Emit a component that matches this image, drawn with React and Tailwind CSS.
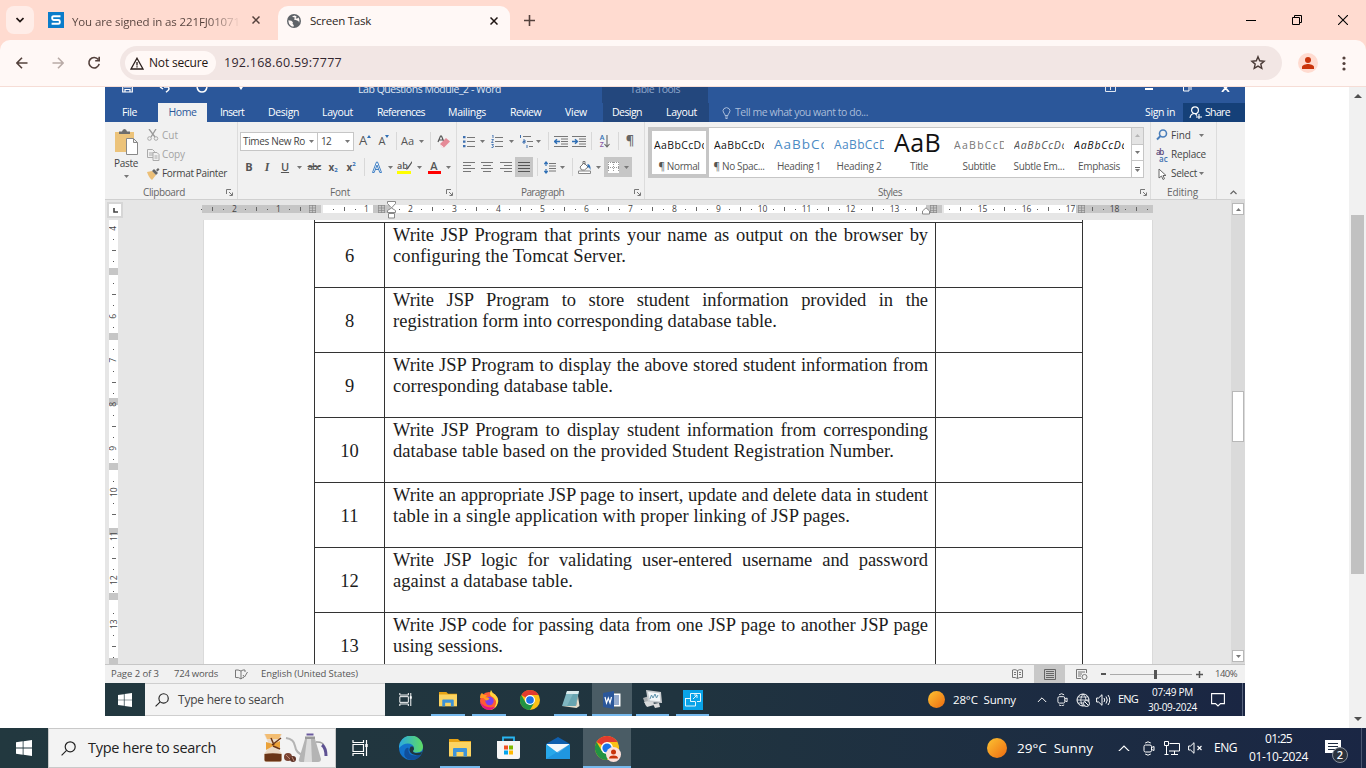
import React, { useLayoutEffect, useRef } from "react";

/* Single-line text whose letter spacing is adjusted so it fills `w` pixels. */
function Fit({ w, className = "", children }) {
  const ref = useRef(null);
  useLayoutEffect(() => {
    const el = ref.current;
    el.style.letterSpacing = "0px";
    const natural = el.getBoundingClientRect().width;
    el.style.letterSpacing = (w - natural) / el.textContent.length + "px";
  }, [w, children]);
  return (
    <span ref={ref} className={"inline-block shrink-0 whitespace-pre " + className}>
      {children}
    </span>
  );
}

function Svg({ w, h, vb, className = "", children, ...rest }) {
  return (
    <svg width={w} height={h} viewBox={vb || `0 0 ${w} ${h}`} fill="none" className={"block shrink-0 " + className} {...rest}>
      {children}
    </svg>
  );
}

const Cell = ({ className = "", children }) => (
  <div className={"flex h-full shrink-0 items-center justify-center " + className}>{children}</div>
);

const Caret = ({ className = "" }) => (
  <Svg w={5} h={3} className={className}><path d="M0 0h5L2.500 3z" fill="#777" /></Svg>
);

const Sep = ({ className = "" }) => <div className={"h-[18px] w-px shrink-0 bg-[#d8d8d8] " + className} />;

/* ---------- Browser chrome ---------- */

function Globe() {
  return (
    <Svg w={14} h={14}>
      <circle cx="7" cy="7" r="7" fill="#5f6368" />
      <path d="M1.400 6.200l3 .5 1.500 1.600-.3 1.500 1.200 1.400-.3 1.500C3.500 12.400 1.400 10 1.400 6.200zM5 2.500l2.600-.9 2 .9-.5 1.200-1.600.6L7 5.600l3.200.8 1.600 1.200.2 1.500c.8-2 .5-4.200-.6-5.600L10 4.800l-1-.6z" fill="#fff8f6" />
    </Svg>
  );
}

function Close({ c = "#3c2b27", s = 8 }) {
  return <Svg w={s} h={s} vb="0 0 8 8"><path d="M.5.5l7 7M7.500.5l-7 7" stroke={c} strokeWidth="1.500" /></Svg>;
}

function TabStrip() {
  return (
    <div className="flex h-10 shrink-0 items-start bg-[#ffdbd0]">
      <div className="ml-1.5 mt-1.5 flex size-7 items-center justify-center rounded-lg bg-[#ffede8]">
        <Svg w={8} h={6}><path d="M.5 1l3.500 3.500L7.500 1" stroke="#1f1512" strokeWidth="1.700" /></Svg>
      </div>
      <div className="ml-3.5 flex h-10 w-[230px] items-center">
        <div className="flex size-4 items-center justify-center bg-[#0a7cca]">
          <Svg w={10} h={10}><path d="M9.500 1.200H2.600Q1.200 1.200 1.200 2.500v1.100Q1.200 5 2.600 5h4.800Q8.800 5 8.800 6.400v1Q8.800 8.800 7.400 8.800H.6" stroke="#fff" strokeWidth="1.900" /></Svg>
        </div>
        <div className="ml-2 w-[169px] bg-gradient-to-r from-[#54413c] from-80% to-[#ffdbd0] to-100% bg-clip-text text-transparent">
          <Fit w={168} className="text-[11.500px] leading-5">You are signed in as 221FJ01071</Fit>
        </div>
        <div className="ml-[11px]"><Close c="#54413c" /></div>
      </div>
      <div className="mt-1.5 flex h-[34px] w-[232px] items-center rounded-t-[10px] bg-[#fff8f6] pb-[5px]">
        <div className="ml-[9px]"><Globe /></div>
        <Fit w={61} className="ml-[9px] text-[11.500px] text-[#2b1f1c]">Screen Task</Fit>
        <div className="ml-[119px]"><Close c="#1f1512" /></div>
      </div>
      <div className="ml-3.5 flex h-10 items-center">
        <Svg w={11} h={11}><path d="M5.500 0v11M0 5.500h11" stroke="#54413c" strokeWidth="1.600" /></Svg>
      </div>
      <div className="ml-auto flex h-10 items-center">
        <div className="flex w-[46px] justify-center"><div className="h-px w-2.5 bg-black" /></div>
        <div className="flex w-[46px] justify-center">
          <Svg w={10} h={10}><path d="M.5 2.500h7v7h-7zM2.500 2V.5h7v7H8" stroke="#000" /></Svg>
        </div>
        <div className="flex w-[46px] justify-center">
          <Svg w={10} h={10}><path d="M0 0l10 10M10 0L0 10" stroke="#000" strokeWidth="1.100" /></Svg>
        </div>
      </div>
    </div>
  );
}

function AddressBar() {
  return (
    <div className="bg-[#ffdbd0]">
      <div className="flex h-[47px] shrink-0 items-center rounded-t-[10px] border-b border-[#f6ddd6] bg-[#fff8f6]">
        <Svg w={12} h={12} className="ml-4"><path d="M11.500 6H1M6 .8L.9 6 6 11.200" stroke="#54413c" strokeWidth="1.600" /></Svg>
        <Svg w={12} h={12} className="ml-6"><path d="M.5 6H11M6 .8L11.100 6 6 11.200" stroke="#b9aba7" strokeWidth="1.600" /></Svg>
        <Svg w={14} h={14} className="ml-[23px]"><path d="M11.300 3.600A5.200 5.200 0 1 0 12.200 7.900M12.200.8v4H8.200" stroke="#54413c" strokeWidth="1.600" /></Svg>
        <div className="ml-[19px] flex h-[34px] w-[1162px] items-center rounded-full bg-[#f2e6e4]">
          <div className="ml-[5px] flex h-6 w-[91px] items-center rounded-full bg-[#fff8f6]">
            <Svg w={14} h={13} className="ml-[5px]"><path d="M7 1.200L13 12H1zM7 5v3.400M7 9.300v1.300" stroke="#2b1f1c" strokeWidth="1.300" /></Svg>
            <Fit w={59} className="ml-[5px] text-xs font-medium text-[#1f1512]">Not secure</Fit>
          </div>
          <Fit w={118} className="ml-2 text-[12.500px] text-[#33262f]">192.168.60.59:7777</Fit>
          <Svg w={16} h={16} className="ml-auto mr-[16px]"><path d="M8 1.700l1.700 4.100 4.400.4-3.300 2.900 1 4.300L8 11.100l-3.800 2.300 1-4.300-3.300-2.900 4.400-.4z" stroke="#4a3a36" strokeWidth="1.400" /></Svg>
        </div>
        <div className="ml-4 flex size-5 items-center justify-center rounded-full bg-[#ffdbd0]">
          <Svg w={12} h={12}><circle cx="6" cy="3" r="3" fill="#c9340b" /><path d="M0 12v-2c0-2 4-3 6-3s6 1 6 3v2z" fill="#c9340b" /></Svg>
        </div>
        <Svg w={4} h={15} className="ml-6"><circle cx="2" cy="2" r="1.600" fill="#54413c" /><circle cx="2" cy="7.500" r="1.600" fill="#54413c" /><circle cx="2" cy="13" r="1.600" fill="#54413c" /></Svg>
      </div>
    </div>
  );
}

/* ---------- Word header ---------- */

function WordHeader() {
  return (
    <div className="flex h-[35px] shrink-0 flex-col bg-[#2b579a] text-[10.500px] text-white">
      <div className="flex h-4 items-start overflow-hidden">
        <Svg w={11} h={6} className="ml-[17px]"><path d="M.7 0v5h9.600V0M2 0h7M3 5V2.500h5V5" stroke="#fff" strokeWidth="1.200" /></Svg>
        <Svg w={12} h={6} className="ml-[26px]"><path d="M1 0l3 2M5 0h4q2 1.500 0 3.500L7 5.300" stroke="#fff" strokeWidth="1.500" /></Svg>
        <Svg w={12} h={6} className="ml-[25px]"><path d="M1 0q1 5 5 5t5-5" stroke="#fff" strokeWidth="1.500" /></Svg>
        <Svg w={4} h={3} className="ml-[31px]"><path d="M0 0h4L2 3z" fill="#fff" /></Svg>
        <Fit w={143} className="-mt-[5px] ml-[115px] leading-[14px] text-[#dfe6f1]">Lab Questions Module_2 - Word</Fit>
        <div className="ml-[101px] flex h-4 w-[106px] justify-center bg-[#23477d]">
          <Fit w={50} className="-mt-[5px] leading-[14px] text-[#8ea6cb]">Table Tools</Fit>
        </div>
        <Svg w={11} h={6} className="ml-[397px]"><path d="M.5 0v4.500h10V0M5.500 0v3" stroke="#dfe6f1" /></Svg>
        <div className="ml-[29px] mt-px h-[2px] w-2 bg-white" />
        <Svg w={9} h={6} className="ml-[30px]"><path d="M.5 0v4h5.500V0M8 0v3" stroke="#fff" /></Svg>
        <Svg w={9} h={5} className="ml-[29px]"><path d="M1 5l3.500-4L8 5M3 0l1.500 1L6 0" stroke="#fff" strokeWidth="1.800" /></Svg>
      </div>
      <div className="flex h-[19px] items-center">
        <Fit w={15} className="ml-[17px]">File</Fit>
        <div className="ml-[21px] flex h-full w-[49px] items-center justify-center bg-[#f1f1f1] text-[#2b579a]"><Fit w={28}>Home</Fit></div>
        <Fit w={24} className="ml-[13px]">Insert</Fit>
        <Fit w={31} className="ml-6">Design</Fit>
        <Fit w={31} className="ml-[23px]">Layout</Fit>
        <Fit w={48} className="ml-6">References</Fit>
        <Fit w={38} className="ml-[23px]">Mailings</Fit>
        <Fit w={31} className="ml-6">Review</Fit>
        <Fit w={22} className="ml-6">View</Fit>
        <div className="ml-4 flex h-full w-[106px] items-center bg-[#23477d]">
          <Fit w={30} className="ml-[9px]">Design</Fit>
          <Fit w={31} className="ml-6">Layout</Fit>
        </div>
        <Svg w={9} h={12} className="ml-[13px]"><path d="M3 8.500Q3 7 1.800 6 0 3.500 2 1.600q2.500-2 5 0 2 1.900.2 4.400Q6 7 6 8.500zM3 10h3M3.500 11.500h2" stroke="#a9bcd9" /></Svg>
        <Fit w={133} className="ml-1 text-[#a9bcd9]">Tell me what you want to do...</Fit>
        <Fit w={30} className="ml-auto">Sign in</Fit>
        <div className="ml-2 flex h-full w-[62px] items-center bg-[#154078]">
          <Svg w={13} h={13} className="ml-1.5"><circle cx="6" cy="4.200" r="3.400" stroke="#fff" strokeWidth="1.200" /><path d="M1 12q.5-4 4-4.500M6.500 8l1.500 1.500M7 11h6M10 8v5" stroke="#fff" strokeWidth="1.100" /></Svg>
          <Fit w={25} className="ml-[3px]">Share</Fit>
        </div>
      </div>
    </div>
  );
}

/* ---------- Ribbon ---------- */

const Launcher = ({ className }) => (
  <Svg w={7} h={7} className={"ml-auto " + className}><path d="M.5 5V.5H5M3 3l3 3M6.500 3.500v3h-3" stroke="#777" /></Svg>
);

const Lines = ({ rows, c = "#777" }) => (
  <Svg w={12} h={11}><path d={rows.map(([x, l], i) => `M${x} ${i * 3 + 0.5}h${l}`).join("")} stroke={c} /></Svg>
);

function ListIcon({ kind }) {
  return (
    <Svg w={kind === "multi" ? 14 : 12} h={13}>
      {kind === "bullet" && <path d="M0 1h2.500v2.200H0zM0 5.500h2.500v2.200H0zM0 10h2.500v2.200H0z" fill="#3f70b0" />}
      {kind === "num" && <path d="M1 0h1v3M.5 4.500h2l-2 3h2M.5 9.500h2l-1 1.200 1 .4-.5 1.400H.5" stroke="#3f70b0" strokeWidth=".9" />}
      {kind === "multi" && <path d="M1.500 0v3M4 5h2v3H4V6.500h2M8 10v3" stroke="#3f70b0" />}
      {kind === "multi" ? <path d="M4 1.500h8M8 6.500h6M10 11.500h4" stroke="#777" /> : <path d="M4 2.500h8M4 6.500h8M4 11.500h8" stroke="#777" />}
    </Svg>
  );
}

function IndentIcon({ flip }) {
  return (
    <Svg w={14} h={11}>
      <path d="M0 .5h14M7 3h7M7 5.500h7M7 8h7M0 10.500h14" stroke="#777" />
      <path d={flip ? "M0 5.500h5M3 3.200l2.500 2.300L3 7.800" : "M6 5.500H1M3 3.200L.5 5.500 3 7.800"} stroke="#2f6fb5" strokeWidth="1.400" />
    </Svg>
  );
}

function Clipboard() {
  return (
    <div className="flex w-[132px] shrink-0 flex-col">
      <div className="flex h-16">
        <div className="flex w-[42px] flex-col items-center pt-[7px]">
          <Svg w={24} h={26}>
            <path d="M1 3h19v20H1z" fill="#ecc37a" /><path d="M5 5V2.500h3Q8.500 0 10.500 0T13 2.500h3V5z" fill="#6d6d6d" />
            <path d="M12.500 9.500h7l4 4v12h-11zM19.500 9.500v4h4" fill="#fff" stroke="#888" />
          </Svg>
          <Fit w={24} className="mt-[2px] text-[10px] leading-3 text-[#444]">Paste</Fit>
          <Caret className="mt-1.5" />
        </div>
        <div className="flex flex-col pt-[3px] text-[10px] text-[#a3a3a3]">
          <div className="flex h-5 items-center">
            <Svg w={12} h={12}><path d="M2 0l6 8M9 0L4 8" stroke="#999" strokeWidth="1.300" /><circle cx="2.500" cy="9.500" r="1.800" stroke="#aaa" /><circle cx="9" cy="9.500" r="1.800" stroke="#aaa" /></Svg>
            <Fit w={16} className="ml-[3px]">Cut</Fit>
          </div>
          <div className="flex h-[19px] items-center">
            <Svg w={13} h={12}><path d="M.5.5h5l2 2v6h-7zM2 4h4M2 6h4" stroke="#aaa" /><path d="M6 3.500h4l2 2v6H6zM7.500 7h3M7.500 9h3" fill="#f1f1f1" stroke="#aaa" /></Svg>
            <Fit w={23} className="ml-0.5">Copy</Fit>
          </div>
          <div className="flex h-[19px] items-center text-[#444]">
            <Svg w={13} h={12}><path d="M0 4l5-1 4 4-4 5Q2 10 0 4z" fill="#ecbf77" /><path d="M5 3l2-2 4 4-2 2zM9 2l2-2 1.500 1.500-2 2z" fill="#666" /></Svg>
            <Fit w={65} className="ml-0.5">Format Painter</Fit>
          </div>
        </div>
      </div>
      <div className="flex h-[13px] items-center"><Fit w={42} className="ml-[38px] text-[10px] text-[#666]">Clipboard</Fit><Launcher className="mr-1" /></div>
    </div>
  );
}

function FontGroup() {
  return (
    <div className="flex w-[219px] shrink-0 flex-col border-l border-[#dcdcdc] pl-[2px] text-[#555]">
      <div className="mt-[9px] flex h-5 items-center">
        <div className="flex h-[19px] w-[78px] items-center border border-[#c6c6c6] bg-white pl-0.5 text-[10px] text-[#444]"><Fit w={62}>Times New Ro</Fit><Caret className="ml-1" /></div>
        <div className="flex h-[19px] w-9 items-center border-y border-r border-[#c6c6c6] bg-white pl-[3px] text-[10px] text-[#444]"><Fit w={10}>12</Fit><Caret className="ml-[14px]" /></div>
        <Cell className="w-[22px]"><span className="text-[13px]">A</span><Svg w={4} h={3} className="-mt-2.5"><path d="M0 3h4L2 0z" fill="#2f6fb5" /></Svg></Cell>
        <Cell className="ml-px w-[14px]"><span className="text-[11px]">A</span><Svg w={4} h={3} className="-mt-2.5"><path d="M0 0h4L2 3z" fill="#2f6fb5" /></Svg></Cell>
        <Sep className="ml-[5px]" />
        <Cell className="w-[21px]"><Fit w={13} className="text-[11px]">Aa</Fit></Cell>
        <Cell className="w-1.5"><Caret /></Cell>
        <Sep className="ml-1.5" />
        <Cell className="w-6"><Svg w={13} h={13}><path d="M1 7l2.500-6h1L7 7M2 5h4" stroke="#555" strokeWidth="1.200" /><path d="M3 9l6-6 4 3.500-6 6H5z" fill="#e58a97" /><path d="M3 9l4 3.500H5z" fill="#fff" /></Svg></Cell>
      </div>
      <div className="mt-1.5 flex h-5 items-center">
        <Cell className="w-[18px] text-[11px] font-bold">B</Cell>
        <Cell className="w-[18px] font-['Liberation_Serif',serif] text-[12px] font-bold italic">I</Cell>
        <Cell className="w-[18px] text-[11px] font-semibold underline">U</Cell>
        <Cell className="w-2.5"><Caret /></Cell>
        <Cell className="w-5 text-[9.500px] font-semibold line-through"><Fit w={13}>abc</Fit></Cell>
        <Cell className="w-[18px] text-[10px] font-bold">x<span className="mt-1.5 text-[6px] text-[#2f6fb5]">2</span></Cell>
        <Cell className="w-[18px] text-[10px] font-bold">x<span className="-mt-1.5 text-[6px] text-[#2f6fb5]">2</span></Cell>
        <Sep className="ml-1" />
        <Cell className="ml-0.5 w-5"><Svg w={12} h={12}><path d="M1.500 11.500L5.500 1h1l4 10.500H8.800L6 4l-2.800 7.500z" fill="#fff" stroke="#3f7fc4" /><path d="M4 8.500h4" stroke="#3f7fc4" /></Svg></Cell>
        <Cell className="ml-px w-[5px]"><Caret /></Cell>
        <Cell className="w-[23px]"><div className="flex flex-col items-center"><div className="flex h-[10px] items-center text-[9px] font-semibold">ab<Svg w={6} h={9} className="-ml-0.5"><path d="M6 0L1 7l-1 2 2-1 4-6z" fill="#555" /></Svg></div><div className="h-[3px] w-[14px] bg-[#ffff00]" /></div></Cell>
        <Cell className="w-1.5"><Caret /></Cell>
        <Cell className="w-6"><div className="flex flex-col items-center"><span className="h-[10px] text-[11px] font-semibold leading-[9px]">A</span><div className="h-[3px] w-[13px] bg-[#ff0000]" /></div></Cell>
        <Cell className="w-[5px]"><Caret /></Cell>
      </div>
      <div className="mt-auto flex h-[13px] items-center"><Fit w={20} className="ml-[90px] text-[10px] text-[#666]">Font</Fit><Launcher className="mr-[3px]" /></div>
    </div>
  );
}

function ParagraphGroup() {
  return (
    <div className="flex w-[188px] shrink-0 flex-col border-l border-[#dcdcdc]">
      <div className="mt-[9px] flex h-5 items-center">
        <Cell className="ml-1.5 w-3"><ListIcon kind="bullet" /></Cell>
        <Cell className="w-3.5"><Caret /></Cell>
        <Cell className="w-4"><ListIcon kind="num" /></Cell>
        <Cell className="w-3"><Caret /></Cell>
        <Cell className="w-[18px]"><ListIcon kind="multi" /></Cell>
        <Cell className="w-[7px]"><Caret /></Cell>
        <Sep className="ml-1.5" />
        <Cell className="ml-[5px] w-3.5"><IndentIcon /></Cell>
        <Cell className="ml-1 w-3.5"><IndentIcon flip /></Cell>
        <Sep className="ml-[5px]" />
        <Cell className="w-[26px]">
          <div className="flex flex-col text-[7px] font-semibold leading-[7px]"><span className="text-[#2f6fb5]">A</span><span className="text-[#8a5aa5]">Z</span></div>
          <Svg w={6} h={13}><path d="M3 0v12M.5 9L3 12l2.500-3" stroke="#666" strokeWidth="1.100" /></Svg>
        </Cell>
        <Sep />
        <Cell className="w-[22px] text-[13px] font-semibold text-[#666]">¶</Cell>
      </div>
      <div className="mt-1.5 flex h-5 items-center">
        <Cell className="ml-1.5 w-3"><Lines rows={[[0, 12], [0, 8], [0, 12], [0, 8]]} /></Cell>
        <Cell className="ml-1.5 w-3"><Lines rows={[[0, 12], [2, 8], [0, 12], [2, 8]]} /></Cell>
        <Cell className="ml-[7px] w-3"><Lines rows={[[0, 12], [4, 8], [0, 12], [4, 8]]} /></Cell>
        <Cell className="ml-[3px] w-[18px] bg-[#c6c6c6]"><Lines rows={[[0, 12], [0, 12], [0, 12], [0, 12]]} c="#555" /></Cell>
        <Sep className="ml-1" />
        <Cell className="ml-1.5 w-3"><Svg w={12} h={13}><path d="M2 1v4M.3 3L2 1l1.700 2M2 8v4M.3 10L2 12l1.700-2" stroke="#2f6fb5" strokeWidth="1.200" /><path d="M5 2.500h7M5 5h7M5 7.500h7M5 10h7" stroke="#777" /></Svg></Cell>
        <Cell className="w-3"><Caret /></Cell>
        <Sep className="ml-1" />
        <Cell className="ml-[5px] w-3.5"><Svg w={14} h={13}><path d="M2 6l4-4 4 4-3.500 3H3.500zM5 3V.5h2V4" stroke="#777" fill="#fff" /><path d="M9.500 3q3.500.5 3 6-1-3-3-3z" fill="#2f6fb5" /><path d="M.5 10h12v2.500H.5z" stroke="#888" fill="#fff" /></Svg></Cell>
        <Cell className="w-3"><Caret /></Cell>
        <Cell className="w-7 bg-[#c6c6c6]"><Svg w={11} h={11}><path d="M0 0h11v11H0z" fill="#fff" /><path d="M.5 0v11M5.500 0v11M10.500 0v11M0 .5h11M0 5.500h11" stroke="#999" strokeDasharray="1 1" /><path d="M0 10.500h11" stroke="#fff" /></Svg><Caret className="ml-[5px]" /></Cell>
      </div>
      <div className="mt-auto flex h-[13px] items-center"><Fit w={43} className="ml-16 text-[10px] text-[#666]">Paragraph</Fit><Launcher className="mr-[3px]" /></div>
    </div>
  );
}

const STYLES = [
  { s: "AaBbCcDc", n: "¶ Normal", nw: 41, sw: 53, cls: "text-[10.500px] text-[#111]", sel: true },
  { s: "AaBbCcDc", n: "¶ No Spac...", nw: 51, sw: 53, cls: "text-[10.500px] text-[#111]" },
  { s: "AaBbCc", n: "Heading 1", nw: 44, sw: 54, cls: "text-[13.500px] text-[#4a8ac4]" },
  { s: "AaBbCcD", n: "Heading 2", nw: 45, sw: 54, cls: "text-[12px] text-[#4a8ac4]" },
  { s: "AaB", n: "Title", nw: 18, sw: 47, cls: "-mt-1.5 text-[25px] text-[#111]" },
  { s: "AaBbCcD", n: "Subtitle", nw: 33, sw: 54, cls: "text-[10.500px] text-[#777]" },
  { s: "AaBbCcDc", n: "Subtle Em...", nw: 51, sw: 53, cls: "text-[10.500px] text-[#555] italic" },
  { s: "AaBbCcDc", n: "Emphasis", nw: 42, sw: 53, cls: "text-[10.500px] text-[#111] italic" },
];

function StylesGroup() {
  return (
    <div className="flex w-[506px] shrink-0 flex-col border-l border-[#dcdcdc]">
      <div className="ml-[3px] mt-[5px] flex h-[51px] w-[496px] border border-[#c6c6c6] bg-white">
        {STYLES.map((t, i) => (
          <div key={i} className={"flex h-full w-[60px] shrink-0 flex-col items-center " + (t.sel ? "border-[3px] border-[#c6c6c6]" : "py-[3px]")}>
            <div className="flex h-[28px] w-[50px] shrink-0 items-center overflow-hidden">
              <Fit w={t.sw} className={"leading-none " + t.cls}>{t.s}</Fit>
            </div>
            <Fit w={t.nw} className="text-[10px] leading-[14px] text-[#555]">{t.n}</Fit>
          </div>
        ))}
        <div className="ml-auto flex w-3 flex-col border-l border-[#c6c6c6]">
          <div className="flex flex-1 items-center justify-center bg-[#e4e4e4]"><Svg w={5} h={3}><path d="M0 3h5L2.500 0z" fill="#b5b5b5" /></Svg></div>
          <div className="flex flex-1 items-center justify-center border-y border-[#c6c6c6]"><Caret /></div>
          <div className="flex flex-1 flex-col items-center justify-center"><div className="mb-px h-px w-[5px] bg-[#666]" /><Caret /></div>
        </div>
      </div>
      <div className="mt-auto flex h-[13px] items-center"><Fit w={24} className="ml-[233px] text-[10px] text-[#666]">Styles</Fit><Launcher className="mr-[3px]" /></div>
    </div>
  );
}

function EditingGroup() {
  return (
    <div className="flex w-[95px] shrink-0 border-l border-[#dcdcdc] text-[10px] text-[#444]">
      <div className="flex w-[66px] flex-col border-r border-[#dcdcdc] pl-[5px] pt-[3px]">
        <div className="flex h-5 items-center">
          <Svg w={12} h={12}><circle cx="7" cy="4.500" r="3.500" stroke="#4a7ebb" strokeWidth="1.600" /><path d="M4.500 7L1 10.500" stroke="#4a7ebb" strokeWidth="2" /></Svg>
          <Fit w={20} className="ml-[3px]">Find</Fit><Caret className="ml-2" />
        </div>
        <div className="flex h-[19px] items-center">
          <div className="flex w-[13px] flex-col text-[8px] font-semibold leading-[7px]"><Fit w={10} className="h-[7px] text-[#5c4a7a]">ab</Fit><Fit w={10} className="ml-[3px] h-[7px] text-[#3f70b0]">ac</Fit></div>
          <Fit w={35} className="ml-0.5">Replace</Fit>
        </div>
        <div className="flex h-[19px] items-center">
          <Svg w={9} h={12} className="ml-0.5"><path d="M1 1v9l2.500-2L5 11.500l1.500-.8L5 7.500h3z" stroke="#666" fill="#fff" /></Svg>
          <Fit w={26} className="ml-1">Select</Fit><Caret className="ml-0.5" />
        </div>
        <div className="mt-auto flex h-[13px] items-center"><Fit w={31} className="ml-[11px] text-[#666]">Editing</Fit></div>
      </div>
      <Svg w={7} h={5} className="mb-1 ml-[13px] mt-auto"><path d="M.5 4l3-3 3 3" stroke="#666" strokeWidth="1.200" /></Svg>
    </div>
  );
}

/* ---------- Rulers ---------- */

const H_TICKS = Array.from({ length: 87 }, (_, k) => {
  if ([10, 11, 16, 17, 66, 67, 80].includes(k)) return "";
  if (k % 4 === 3) return String(Math.abs(k - 11) / 4);
  return k % 4 === 1 ? "|" : ".";
});

const V_TICKS = Array.from({ length: 40 }, (_, k) => {
  if ([4, 10, 22, 27, 34].includes(k)) return "";
  if (k % 4 === 0) return String(4 + k / 4);
  return k % 4 === 2 ? "|" : ".";
});

const Grip = () => (
  <Svg w={7} h={8}><path d="M0 .5h7M0 3h7M0 5.500h7M0 7.500h7M.5 0v8M3.500 0v8M6.500 0v8" stroke="#8a8a8a" strokeWidth=".7" /></Svg>
);

function HorizontalRuler() {
  return (
    <div className="flex h-[21px] shrink-0 border-t border-[#d0d0d0]">
      <div className="ml-[2px] mt-[2px] flex size-4 items-center justify-center border-2 border-[#d6d6d6] bg-white">
        <Svg w={5} h={5}><path d="M1 0v4h4" stroke="#444" strokeWidth="1.600" /></Svg>
      </div>
      <div className="ml-[73px] mt-[5px] grid h-[10px] w-[957.5px]">
        <div className="flex h-2 pl-1.5 [grid-area:1/1]">
          <div className="flex w-[119px] items-center justify-end bg-[#c6c6c6] pr-[5px]"><Grip /></div>
          <div className="ml-0.5 w-[50px] bg-white" />
          <div className="flex w-[17px] items-center bg-[#c6c6c6] pl-[5px]"><Grip /></div>
          <div className="w-[536px] bg-white" />
          <div className="flex w-4 items-center bg-[#c6c6c6] pl-1"><Grip /></div>
          <div className="ml-0.5 w-[132px] bg-white" />
          <div className="flex w-[77px] items-center bg-[#c6c6c6] pl-[2px]"><Grip /></div>
        </div>
        <div className="flex h-2 [grid-area:1/1]">
          {H_TICKS.map((t, i) => (
            <div key={i} className="flex min-w-0 flex-1 items-center justify-center whitespace-nowrap text-[8.500px] leading-none text-[#444]">
              {t === "." ? <div className="size-px bg-[#555]" /> : t === "|" ? <div className="h-1 w-px bg-[#666]" /> : t}
            </div>
          ))}
        </div>
        <div className="relative h-0 [grid-area:1/1]">
          <Svg w={9} h={18} className="absolute -top-1 left-[191px]"><path d="M.5.500h8v2L4.500 7l-4-4.500zM.5 11.500v-2L4.500 7l4 2.500v2zM1.500 12.500h6v4.500h-6z" fill="#fff" stroke="#888" /></Svg>
          <Svg w={8} h={8} className="absolute left-[726px] top-[2px]"><path d="M.5 7V4L4 .8 7.500 4v3z" fill="#fff" stroke="#888" /></Svg>
        </div>
      </div>
    </div>
  );
}

function VerticalRuler() {
  return (
    <div className="ml-1 grid h-full w-[9px] overflow-hidden bg-white">
      <div className="flex flex-col pt-12 [grid-area:1/1]">
        {Array.from({ length: 7 }, (_, i) => <div key={i} className="mb-[58.500px] h-[6.500px] shrink-0 bg-[#c6c6c6]" />)}
      </div>
      <div className="flex flex-col pt-[3px] [grid-area:1/1]">
        {V_TICKS.map((t, i) => (
          <div key={i} className="flex h-[11px] shrink-0 items-center justify-center text-[8.500px] leading-none text-[#444]">
            {t === "." ? <div className="size-px bg-[#555]" /> : t === "|" ? <div className="h-px w-1 bg-[#666]" /> : <span className="-rotate-90">{t}</span>}
          </div>
        ))}
      </div>
    </div>
  );
}

/* ---------- Document ---------- */

const ROWS = [
  ["6", "Write JSP Program that prints your name as output on the browser by", "configuring the Tomcat Server.", 233],
  ["8", "Write JSP Program to store student information provided in the", "registration form into corresponding database table.", 384],
  ["9", "Write JSP Program to display the above stored student information from", "corresponding database table.", 220],
  ["10", "Write JSP Program to display student information from corresponding", "database table based on the provided Student Registration Number.", 501],
  ["11", "Write an appropriate JSP page to insert, update and delete data in student", "table in a single application with proper linking of JSP pages.", 457],
  ["12", "Write JSP logic for validating user-entered username and password", "against a database table.", 180],
  ["13", "Write JSP code for passing data from one JSP page to another JSP page", "using sessions.", 110],
];

function DocPage() {
  return (
    <div className="ml-[85px] h-full w-[950px] overflow-hidden border-x border-[#dadada] bg-white pl-[110px] font-['Liberation_Serif','Times_New_Roman',serif] text-[18.500px] leading-[21px] text-[#1c1c1c]">
      <div className="flex w-[769px] flex-col border-x border-[#333] pt-[2px]">
        {ROWS.map(([num, first, second, w]) => (
          <div key={num} className="flex h-[65px] shrink-0 border-t border-[#333]">
            <div className="flex w-[69px] shrink-0 justify-center pt-[23px]">{num}</div>
            <div className="w-[552px] shrink-0 border-x border-[#333] pl-2 pt-[2px]">
              <div className="w-[535px] whitespace-nowrap tracking-[-0.09px] [text-align-last:justify]">{first}</div>
              <Fit w={w} className="align-top">{second}</Fit>
            </div>
          </div>
        ))}
      </div>
    </div>
  );
}

function WordScrollbar() {
  return (
    <div className="flex w-3.5 shrink-0 flex-col items-center bg-[#dadada] pt-1">
      <div className="flex h-3 w-3 items-center justify-center border border-[#b8b8b8] bg-white"><Svg w={5} h={3}><path d="M0 3h5L2.500 0z" fill="#777" /></Svg></div>
      <div className="mt-[176px] h-[51px] w-3 border border-[#b8b8b8] bg-white" />
      <div className="mb-[2px] mt-auto flex h-3 w-3 items-center justify-center border border-[#b8b8b8] bg-white"><Svg w={5} h={3}><path d="M0 0h5L2.500 3z" fill="#777" /></Svg></div>
    </div>
  );
}

function StatusBar() {
  return (
    <div className="flex h-[19px] shrink-0 items-center border-t border-[#c6c6c6] bg-[#f1f1f1] text-[9.500px] text-[#555]">
      <Fit w={48} className="ml-1.5">Page 2 of 3</Fit>
      <Fit w={44} className="ml-[15px]">724 words</Fit>
      <Svg w={13} h={11} className="ml-[17px]"><path d="M6 2Q3 .5.500 1v7.500Q4 8 6 10q1-1.500 3-1.500M6 2v8M6 2q2-1.500 4-1v2M8 6l1.500 2L12.500 3" stroke="#777" /></Svg>
      <Fit w={97} className="ml-[13px]">English (United States)</Fit>
      <Svg w={11} h={10} className="ml-auto"><path d="M5.500 1.500Q3 0 .5 1v7.500q3-.5 5 1 2-1.500 5-1V1q-3-1-5 .5v8M2 3.500h2M2 5.500h2M7 3.500h2M7 5.500h2" stroke="#777" /></Svg>
      <div className="ml-[11px] flex h-full w-[31px] items-center justify-center bg-[#c8c8c8]"><Svg w={12} h={11}><path d="M.5.500h11v10H.5zM2 2.500h8M2 4.500h8M2 6.500h8M2 8.500h8" stroke="#666" /></Svg></div>
      <Svg w={12} h={11} className="ml-[11px]"><path d="M10.500 4V.500H.5v9H5M2 3h7M2 5h4M2 7h3" stroke="#777" /><circle cx="8.500" cy="8" r="2.500" stroke="#777" /></Svg>
      <div className="ml-[13px] h-[1.500px] w-[5px] bg-[#555]" />
      <div className="ml-1 flex w-[82px] items-center">
        <div className="h-px w-[44px] bg-[#aaa]" /><div className="h-[9px] w-[3px] bg-[#555]" /><div className="h-px flex-1 bg-[#aaa]" />
      </div>
      <Svg w={7} h={7} className="ml-1"><path d="M3.500 0v7M0 3.500h7" stroke="#555" strokeWidth="1.500" /></Svg>
      <Fit w={22} className="ml-3 mr-2">140%</Fit>
    </div>
  );
}

/* ---------- Taskbar icons ---------- */

const Windows = ({ s }) => (
  <Svg w={s} h={s} vb="0 0 16 16"><path d="M0 2.300l6.700-1v6.300H0zM7.500 1.200L16 0v7.600H7.500zM0 8.400h6.700v6.300L0 13.700zM7.500 8.400H16V16l-8.500-1.200z" fill="#fff" /></Svg>
);
const Search = ({ s }) => (
  <Svg w={s} h={s} vb="0 0 15 15"><circle cx="9.200" cy="5.800" r="5" stroke="#222" strokeWidth="1.200" /><path d="M5.600 9.400L.6 14.400" stroke="#222" strokeWidth="1.200" /></Svg>
);
const TaskView = ({ s }) => (
  <Svg w={s} h={s} vb="0 0 16 16"><path d="M1 0v2.500h10.500V0M1 16v-2.500h10.500V16M1 4.500h10.500v7H1zM14.500 0v16" stroke="#fff" strokeWidth="1.200" /><path d="M13.300 4h2.400v3h-2.400z" fill="#fff" /></Svg>
);
const Folder = ({ w }) => (
  <Svg w={w} h={w * 0.82} vb="0 0 22 18"><path d="M0 0h9l2 2h11v15H0z" fill="#e8a313" /><path d="M0 3h22v14.500H0z" fill="#fcd462" /><path d="M4 17.500V10q0-1 1-1h12q1 0 1 1v7.500h-3.500V13h-7v4.500z" fill="#3e93d8" /></Svg>
);
const Chrome = ({ s }) => (
  <Svg w={s} h={s} vb="0 0 24 24">
    <circle cx="12" cy="12" r="12" fill="#fbc116" />
    <path d="M12 12L1.600 6A12 12 0 0 1 22.400 6H12z" fill="#e33b2e" /><path d="M1.600 6a12 12 0 0 0 10.400 18l5.200-9L12 12 6.800 15z" fill="#229342" />
    <circle cx="12" cy="12" r="6" fill="#fff" /><circle cx="12" cy="12" r="4.600" fill="#1a73e8" />
  </Svg>
);
const Sun = ({ s }) => (
  <Svg w={s} h={s} vb="0 0 20 20"><defs><linearGradient id="sun" x1="0" y1="0" x2="1" y2="1"><stop stopColor="#fcc433" /><stop offset="1" stopColor="#ee6a10" /></linearGradient></defs><circle cx="10" cy="10" r="10" fill="url(#sun)" /></Svg>
);
const ChevUp = ({ w }) => <Svg w={w} h={w * 0.58} vb="0 0 12 7"><path d="M.6 6.400L6 1l5.400 5.400" stroke="#fff" strokeWidth="1.200" /></Svg>;
const MeetNow = ({ s }) => (
  <Svg w={s} h={s * 1.25} vb="0 0 12 15"><path d="M2.200 2Q5-.4 7.800 2M2.200 13Q5 15.400 7.800 13" stroke="#fff" /><rect x="1" y="4" width="7.500" height="7" rx="1.500" stroke="#fff" /><path d="M8.500 6.500L11 5.500v4l-2.500-1" stroke="#fff" /></Svg>
);
const Speaker = ({ mute }) => (
  <Svg w={15} h={12}><path d="M.6 4v4h2L6 11.300V.7L2.600 4z" stroke="#fff" />{mute ? <path d="M9.500 4l4 4M13.500 4l-4 4" stroke="#fff" strokeWidth="1.100" /> : <path d="M8 4q1.500 2 0 4M10 2.500q2.600 3.500 0 7M12 1q3.600 5 0 10" stroke="#fff" />}</Svg>
);

const TaskItem = ({ className = "", line = "", children }) => (
  <div className={"flex h-full shrink-0 flex-col items-center " + className}>
    <div className="flex flex-1 items-center pt-0.5">{children}</div>
    <div className={"h-[2px] " + line} />
  </div>
);

function InnerTaskbar() {
  return (
    <div className="flex h-[33px] shrink-0 items-center bg-gradient-to-r from-[#22383f] via-[#20343f] to-[#1a2643] text-white">
      <div className="flex w-10 justify-center"><Windows s={14} /></div>
      <div className="flex h-full w-60 items-center border-y border-[#cfcfcf] bg-[#f3f3f3]">
        <div className="ml-2.5"><Search s={14} /></div>
        <Fit w={106} className="ml-[9px] text-[12px] text-[#444]">Type here to search</Fit>
      </div>
      <TaskItem className="w-10"><TaskView s={13} /></TaskItem>
      <TaskItem className="ml-[6px] w-[34px]" line="w-full bg-[#76b9ed]"><Folder w={18} /></TaskItem>
      <TaskItem className="ml-[7px] w-[34px]" line="w-full bg-[#76b9ed]">
        <Svg w={20} h={20}><circle cx="10" cy="11" r="9" fill="#ff5a36" /><path d="M12 0q1 3 4 4.500 4 4 3 8Q17 20 10 20q8-2 7-9-2-4-5-5-2-2 0-6z" fill="#ffd43b" /><path d="M1 8q0-4 2-5l2 2h3L6 8z" fill="#ff9b22" /><path d="M1 12q2 7 9 8 4 0 6-3Q6 19 1 12z" fill="#e31587" /><circle cx="10.500" cy="11" r="4.200" fill="#7a3ff0" /><path d="M4.500 8q3-1.500 6 .5-1 2-3.500 2z" fill="#ff9b22" /></Svg>
      </TaskItem>
      <TaskItem className="ml-[7px] w-[34px]"><Chrome s={20} /></TaskItem>
      <TaskItem className="ml-[7px] w-[33px]" line="w-full bg-[#76b9ed]">
        <Svg w={19} h={19}><path d="M6 1h12l-3 15H1z" fill="#7fb6c1" /><path d="M6 1h12l-.8 3H5z" fill="#dcebed" /><path d="M12 4h5l-2.500 12H6z" fill="#68a5b1" /><path d="M1 16h14l2-10 1.500 10-3 2z" fill="#e6dfcd" /></Svg>
      </TaskItem>
      <TaskItem className="ml-[5px] w-10 bg-[#4a5c65]" line="w-full bg-[#76b9ed]">
        <Svg w={18} h={18}><path d="M9 2.500h8.500v13H9z" fill="#fff" /><path d="M11 5h5M11 7h5M11 9h5M11 11h5M11 13h5" stroke="#2b579a" /><path d="M0 2l11-2v18L0 16z" fill="#2b579a" /><path d="M2 6l1.500 6L5.300 7 7 12l1.500-6" stroke="#fff" strokeWidth="1.200" /></Svg>
      </TaskItem>
      <TaskItem className="ml-1 w-[33px]" line="w-full bg-[#76b9ed]">
        <Svg w={20} h={19}><path d="M0 8l9-3 2 7-8 4z" fill="#a9adb0" /><path d="M1 12l9-2 1 5-7 2z" fill="#d8dadb" /><path d="M3 0l15 2 1 11-14-1z" fill="#c9cdd0" /><path d="M5 2l11.500 1.200.7 8L7 10.500z" fill="#f2f7f9" /><path d="M7 9l1.500-4L10 8l2-4 1.500 4L15 5" stroke="#5d93ad" /><path d="M10 14l6-1 1 4-5 1z" fill="#dcdcdc" /></Svg>
      </TaskItem>
      <TaskItem className="ml-[7px] w-[33px]" line="w-full bg-[#76b9ed]">
        <Svg w={20} h={20}><path d="M0 0h20v20H0z" fill="#0aa3e8" /><path d="M7.500 7V3.500h10v8H14M2.500 8.500h5M2.500 8v8h10v-4M7.500 7v4.500h5M10 9l4-4M11 5h3v3" stroke="#fff" strokeWidth=".9" /></Svg>
      </TaskItem>
      <div className="ml-auto"><Sun s={17} /></div>
      <Fit w={63} className="ml-2 text-[11.500px]">28°C  Sunny</Fit>
      <div className="ml-[21px]"><ChevUp w={10} /></div>
      <div className="ml-2.5"><MeetNow s={11} /></div>
      <Svg w={14} h={14} className="ml-2"><circle cx="7" cy="7" r="6" stroke="#fff" /><path d="M1 7h12M2 4h10M2 10h5M7 1Q2.500 7 7 13M7 1q3 3 3 6" stroke="#fff" strokeWidth=".8" /><circle cx="10.500" cy="10.500" r="3" fill="#1d2b40" stroke="#fff" /><path d="M9 9l3 3" stroke="#fff" /></Svg>
      <div className="ml-1.5"><Speaker /></div>
      <Fit w={20} className="ml-[7px] text-[11px]">ENG</Fit>
      <div className="ml-2.5 flex w-[49px] flex-col items-center text-[10px] leading-[15px]"><Fit w={41}>07:49 PM</Fit><Fit w={49}>30-09-2024</Fit></div>
      <Svg w={14} h={14} className="ml-[14px]"><path d="M.6.600h12.800v10H9.500L7 13l-2.500-2.400H.6z" stroke="#fff" strokeWidth="1.100" /></Svg>
      <div className="ml-[17px] mr-[2px] h-full w-px bg-[#5a6680]" />
    </div>
  );
}

function Coffee() {
  return (
    <Svg w={66} h={30}>
      <path d="M2 1h18l-6 12 6 8v6q0 2-2 2H4q-2 0-2-2v-6l6-8z" fill="#ead9c6" /><path d="M3 1h16l-2 5H5z" fill="#f3bd72" />
      <path d="M2.500 21q8-1.500 17 0v6q0 1.500-2 1.500H4.500q-2 0-2-1.500z" fill="#6a3415" /><path d="M4 9l7 2 7-3v7l-7-2-7 4z" fill="#eba23a" /><path d="M10 12l9-7M11 13l7 3M9 5l3 7" stroke="#6a3415" strokeWidth="1.500" />
      <circle cx="26" cy="24" r="4" fill="#7a4433" /><circle cx="31" cy="26" r="3" fill="#5e3226" /><path d="M24 22l4 4M30 24l2 4" stroke="#c08a76" />
      <path d="M24 5q8 1 9 8t8 9" stroke="#b4b4b4" strokeWidth="2" />
      <path d="M43 6h10l6 20q0 3-3 3H39q-3 0-2-3z" fill="#b4b4b4" /><path d="M45 6h4l1 23h-8z" fill="#dcdcdc" />
      <path d="M43 3.500h10V6H43z" fill="#999" /><path d="M44.500.5h7v2h-7z" fill="#6a5a9e" /><path d="M54 9q7-.5 8 4" stroke="#a0a0a0" strokeWidth="1.500" /><path d="M60 12q4 3 4 11" stroke="#5e5293" strokeWidth="3" />
    </Svg>
  );
}

function OuterTaskbar() {
  return (
    <div className="flex h-10 shrink-0 items-center bg-gradient-to-r from-[#22383f] via-[#20343f] to-[#1a2644] text-white">
      <div className="flex w-12 justify-center"><Windows s={16} /></div>
      <div className="flex h-full w-72 items-center border border-[#c9c9c9] bg-[#f3f3f3]">
        <div className="ml-3"><Search s={15} /></div>
        <Fit w={128} className="ml-3 text-[14.500px] text-[#222]">Type here to search</Fit>
        <div className="ml-[46px]"><Coffee /></div>
      </div>
      <TaskItem className="w-12"><TaskView s={16} /></TaskItem>
      <TaskItem className="ml-0.5 w-[50px]">
        <Svg w={24} h={24}>
          <defs><linearGradient id="edgeA" x1="0" y1="0" x2="1" y2="0"><stop stopColor="#2aa8e0" /><stop offset="1" stopColor="#5fdc62" /></linearGradient></defs>
          <circle cx="12" cy="12" r="12" fill="#1273cc" /><path d="M0 12A12 12 0 0 1 24 11q0 5-6 5.500-4 0-4-1.500 2-3-.5-6Q7 5 0 12z" fill="url(#edgeA)" />
          <path d="M9.500 12q-1.500 10 13 6.500Q19 24 12 24 4 23 5.500 15 7 11 9.500 12z" fill="#104f9b" /><path d="M14.300 10.500q1.500 2-.3 4.500 0 2 4 2 3 0 5-1.500l-.8 3q-5 1.500-9-.5-4.500-3-1.500-7.500z" fill="#20353f" />
        </Svg>
      </TaskItem>
      <TaskItem className="ml-1 w-10" line="w-full bg-[#76b9ed]"><Folder w={22} /></TaskItem>
      <TaskItem className="ml-1 w-12">
        <Svg w={23} h={24}><path d="M6 6V1.500h11V6" stroke="#29b6f2" strokeWidth="1.800" /><path d="M0 5h23v16q0 2-2 2H2q-2 0-2-2z" fill="#f6f6f6" /><path d="M7 9.500h4v4H7z" fill="#f25022" /><path d="M12 9.500h4v4h-4z" fill="#7fba00" /><path d="M7 14.500h4v4H7z" fill="#00a4ef" /><path d="M12 14.500h4v4h-4z" fill="#ffb900" /></Svg>
      </TaskItem>
      <TaskItem className="ml-0.5 w-12"><Svg w={24} h={22}><path d="M0 7l12-7 12 7v4H0z" fill="#0f5fae" /><path d="M1 7h22v9H1z" fill="#f4f8fb" /><path d="M0 7l12 9 12-9v15H0z" fill="#28a8ea" /><path d="M24 7v15H0z" fill="#1c8fdc" opacity=".7" /></Svg></TaskItem>
      <TaskItem className="ml-px w-12 bg-[#4a5c65]" line="w-full bg-[#76b9ed]">
        <div className="relative"><Chrome s={24} />
          <Svg w={15} h={15} className="absolute -right-0.5 top-[11px]"><circle cx="7.500" cy="7.500" r="7.500" fill="#fde0d8" /><circle cx="7.500" cy="5" r="2.500" fill="#c9340b" /><path d="M3 11.500q0-3 4.500-3t4.500 3z" fill="#c9340b" /></Svg>
        </div>
      </TaskItem>
      <div className="ml-auto"><Sun s={20} /></div>
      <Fit w={76} className="ml-2.5 text-[13.500px]">29°C  Sunny</Fit>
      <div className="ml-[25px]"><ChevUp w={12} /></div>
      <div className="ml-[13px]"><MeetNow s={12} /></div>
      <Svg w={16} h={14} className="ml-[9px]"><path d="M5.500 2.500h10v7.500H5M10.500 10v3M7 13.500h7M.5.500h4v4h-4zM2.500 4.500v9M.5 13.500h4" stroke="#fff" /></Svg>
      <div className="ml-2"><Speaker mute /></div>
      <Fit w={23} className="ml-[11px] text-xs">ENG</Fit>
      <div className="ml-3 flex w-[59px] flex-col items-center text-xs leading-[18px]"><Fit w={27}>01:25</Fit><Fit w={59}>01-10-2024</Fit></div>
      <div className="relative ml-[17px]">
        <Svg w={16} h={17}><path d="M0 0h16v13h-4v3l-3-3H0z" fill="#fff" /><path d="M3 3.500h10M3 6.500h10M3 9.500h7" stroke="#1d2b40" /></Svg>
        <div className="absolute left-[7px] top-[7px] flex size-4 items-center justify-center rounded-full border border-[#8a929e] bg-[#2c333d] text-[11px] font-semibold leading-none">2</div>
      </div>
      <div className="ml-5 mr-1 h-full w-px bg-[#4a5670]" />
    </div>
  );
}

function WordShare() {
  return (
    <div className="ml-[105px] flex h-[629px] w-[1140px] flex-col overflow-hidden bg-[#e6e6e6]">
      <WordHeader />
      <div className="flex h-[77px] shrink-0 bg-[#f1f1f1]">
        <Clipboard /><FontGroup /><ParagraphGroup /><StylesGroup /><EditingGroup />
      </div>
      <div className="flex h-[465px] shrink-0">
        <div className="flex w-[1126px] flex-col">
          <HorizontalRuler />
          <div className="flex h-[444px]"><VerticalRuler /><DocPage /></div>
        </div>
        <WordScrollbar />
      </div>
      <StatusBar />
      <InnerTaskbar />
    </div>
  );
}

export default function App() {
  return (
    <div className="flex h-[768px] w-[1366px] flex-col overflow-hidden bg-white font-['Open_Sans','Noto_Sans',sans-serif]">
      <TabStrip />
      <AddressBar />
      <div className="flex h-[641px] shrink-0 bg-white">
        <WordShare />
        <div className="ml-auto flex w-[17px] flex-col items-center bg-[#f1f1f1]">
          <Svg w={8} h={4} className="mt-[7px]"><path d="M0 4h8L4 0z" fill="#505050" /></Svg>
          <div className="mt-[117px] h-[359px] w-[13px] bg-[#c1c1c1]" />
          <Svg w={8} h={4} className="mb-[7px] mt-auto"><path d="M0 0h8L4 4z" fill="#505050" /></Svg>
        </div>
      </div>
      <OuterTaskbar />
    </div>
  );
}
